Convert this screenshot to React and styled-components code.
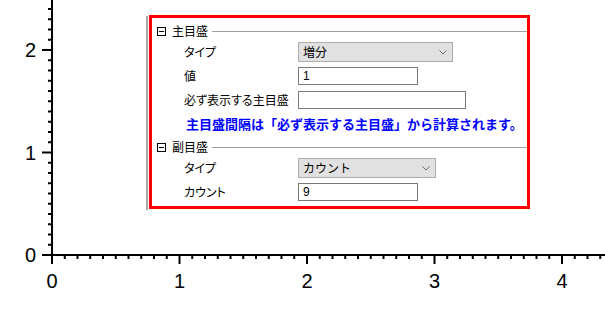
import styled, { createGlobalStyle } from "styled-components";

const GlobalStyle = createGlobalStyle`
  html, body {
    margin: 0;
    padding: 0;
    background: #ffffff;
  }
  #root {
    width: 605px;
    height: 323px;
  }
`;

const Stage = styled.div`
  position: relative;
  width: 605px;
  height: 323px;
  overflow: hidden;
  background: #ffffff;
`;

const Chart = styled.svg`
  display: block;
`;

const Panel = styled.div`
  position: absolute;
  left: 146px;
  top: 16px;
  height: 194px;
  border-left: 2px solid #a9a9a9;
  background: #ffffff;
  display: flex;
`;

const Highlight = styled.div`
  margin-left: 1px;
  margin-top: -1px;
  width: 381px;
  height: 194px;
  box-sizing: border-box;
  border: 3px solid #ff0000;
  padding: 5px 0 0 5px;
  display: flex;
  flex-direction: column;
  font-family: "Noto Sans CJK JP", sans-serif;
  font-size: 12px;
  color: #000000;
`;

const SectionHeader = styled.div`
  display: flex;
  align-items: center;
  height: 16px;
  margin-top: ${(p) => p.$gap || 0}px;
  line-height: 1;
`;

const Toggle = styled.span`
  position: relative;
  width: 9px;
  height: 9px;
  box-sizing: border-box;
  border: 1px solid #000000;
  &::after {
    content: "";
    position: absolute;
    left: 1px;
    right: 1px;
    top: 3px;
    height: 1px;
    background: #000000;
  }
`;

const SectionTitle = styled.span`
  margin-left: 6px;
  font-size: 12px;
`;

const Rule = styled.span`
  flex: 1;
  height: 1px;
  margin-left: 4px;
  background: #a0a0a0;
`;

const Row = styled.div`
  display: flex;
  align-items: center;
  height: 24px;
  padding-left: 27px;
  margin-top: ${(p) => p.$gap || 0}px;
`;

const Label = styled.span`
  width: 114px;
  line-height: 1;
  font-feature-settings: "palt";
`;

const Select = styled.div`
  width: ${(p) => p.$width}px;
  height: 20px;
  box-sizing: border-box;
  border: 1px solid #adadad;
  background: #e1e1e1;
  display: flex;
  align-items: center;
  justify-content: space-between;
  padding: 0 5px 0 4px;
  line-height: 1;
`;

const Field = styled.div`
  width: ${(p) => p.$width}px;
  height: 18px;
  box-sizing: border-box;
  border: 1px solid #7a7a7a;
  background: #ffffff;
  display: flex;
  align-items: center;
  padding-left: 4px;
  line-height: 1;
  font-family: "Liberation Sans", "Noto Sans CJK JP", sans-serif;
`;

const Note = styled.div`
  display: flex;
  align-items: center;
  height: 22px;
  padding-left: 29px;
  color: #0000ff;
  font-weight: bold;
  font-size: 13px;
  line-height: 1;
  white-space: nowrap;
`;

const Chevron = () => (
  <svg width="8" height="5" viewBox="0 0 8 5">
    <polyline points="0.5,0.5 4,4 7.5,0.5" fill="none" stroke="#6d6d6d" strokeWidth="1" />
  </svg>
);

const X0 = 52;
const Y0 = 255;
const XU = 127.5;
const YU = 102.5;

const AxisChart = () => {
  const yTicks = [];
  for (let i = 0; i <= 25; i++) {
    const y = Y0 - (i / 10) * YU;
    const major = i % 10 === 0;
    yTicks.push(
      <line key={"y" + i} x1={major ? 42 : 48} x2={X0} y1={y} y2={y} stroke="#000" strokeWidth="2" />
    );
  }
  const xTicks = [];
  for (let i = 0; i <= 43; i++) {
    const x = X0 + (i / 10) * XU;
    const major = i % 10 === 0;
    xTicks.push(
      <line key={"x" + i} x1={x} x2={x} y1={Y0} y2={major ? 264 : 259} stroke="#000" strokeWidth="2" />
    );
  }
  return (
    <Chart width="605" height="323" viewBox="0 0 605 323">
      <line x1={X0} x2={X0} y1="0" y2={Y0 + 1} stroke="#000" strokeWidth="2" />
      <line x1="42" x2="605" y1={Y0} y2={Y0} stroke="#000" strokeWidth="2" />
      {yTicks}
      {xTicks}
      <g fontFamily="'Liberation Sans', Arial, sans-serif" fontSize="20" fill="#000">
        {[0, 1, 2].map((v) => (
          <text key={"yl" + v} x="36" y={Y0 - v * YU + 7} textAnchor="end">
            {v}
          </text>
        ))}
        {[0, 1, 2, 3, 4].map((v) => (
          <text key={"xl" + v} x={X0 + v * XU} y="288" textAnchor="middle">
            {v}
          </text>
        ))}
      </g>
    </Chart>
  );
};

const App = () => {
  return (
    <Stage>
      <GlobalStyle />
      <AxisChart />
      <Panel>
        <Highlight>
          <SectionHeader>
            <Toggle />
            <SectionTitle>主目盛</SectionTitle>
            <Rule />
          </SectionHeader>
          <Row $gap={1}>
            <Label>タイプ</Label>
            <Select $width={155}>
              <span>増分</span>
              <Chevron />
            </Select>
          </Row>
          <Row>
            <Label>値</Label>
            <Field $width={120}>1</Field>
          </Row>
          <Row>
            <Label>必ず表示する主目盛</Label>
            <Field $width={168} />
          </Row>
          <Note>主目盛間隔は「必ず表示する主目盛」から計算されます。</Note>
          <SectionHeader $gap={5}>
            <Toggle />
            <SectionTitle>副目盛</SectionTitle>
            <Rule />
          </SectionHeader>
          <Row $gap={1}>
            <Label>タイプ</Label>
            <Select $width={138}>
              <span>カウント</span>
              <Chevron />
            </Select>
          </Row>
          <Row>
            <Label>カウント</Label>
            <Field $width={120}>9</Field>
          </Row>
        </Highlight>
      </Panel>
    </Stage>
  );
};

export default App;
